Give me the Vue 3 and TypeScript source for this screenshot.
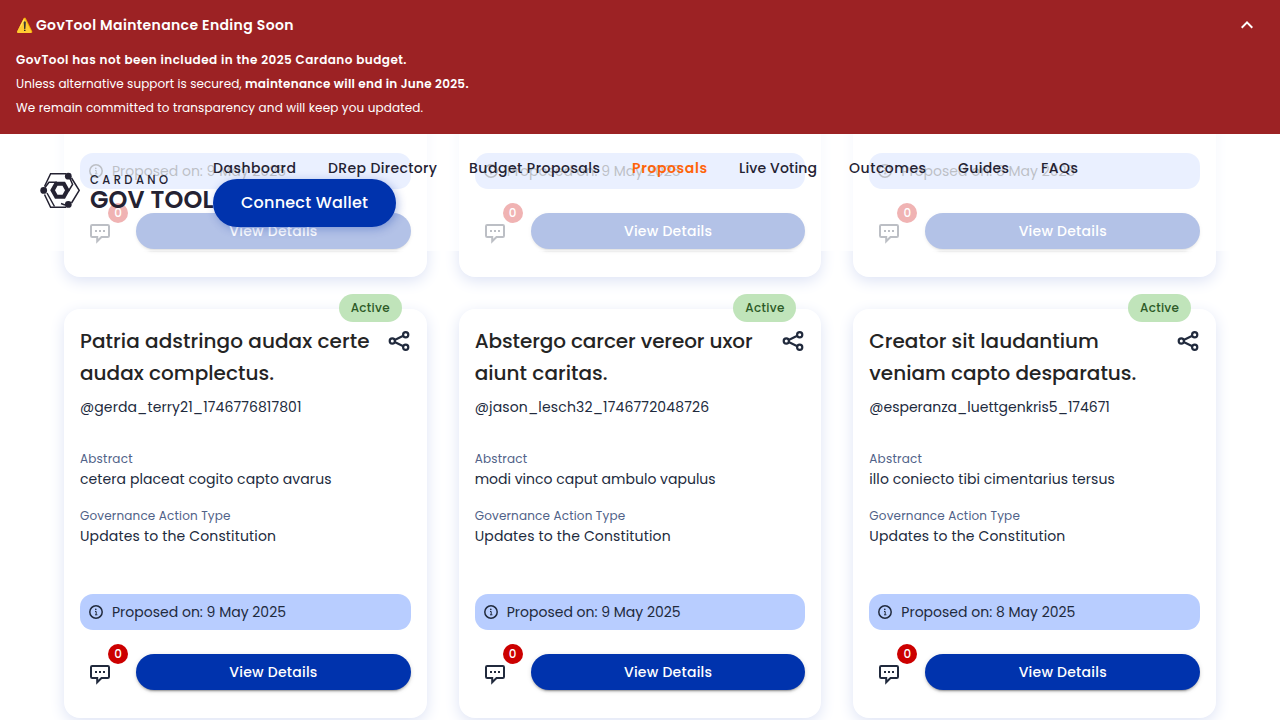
<script setup lang="ts">
interface Fitted { text: string; width: number }
interface Proposal {
  id: number
  title?: Fitted[]
  author?: Fitted
  abstract?: Fitted
  date: string
}

const nav = [
  { text: 'Dashboard', width: 83 },
  { text: 'DRep Directory', width: 109 },
  { text: 'Budget Proposals', width: 131 },
  { text: 'Proposals', width: 75, active: true },
  { text: 'Live Voting', width: 78 },
  { text: 'Outcomes', width: 77 },
  { text: 'Guides', width: 51 },
  { text: 'FAQs', width: 37 },
]

const proposals: Proposal[] = [
  { id: 1, date: '9 May 2025' },
  { id: 2, date: '9 May 2025' },
  { id: 3, date: '8 May 2025' },
  {
    id: 4,
    title: [{ text: 'Patria adstringo audax certe', width: 289.5 }, { text: 'audax complectus.', width: 194 }],
    author: { text: '@gerda_terry21_1746776817801', width: 221.5 },
    abstract: { text: 'cetera placeat cogito capto avarus', width: 251.5 },
    date: '9 May 2025',
  },
  {
    id: 5,
    title: [{ text: 'Abstergo carcer vereor uxor', width: 278 }, { text: 'aiunt caritas.', width: 133 }],
    author: { text: '@jason_lesch32_1746772048726', width: 234.5 },
    abstract: { text: 'modi vinco caput ambulo vapulus', width: 241 },
    date: '9 May 2025',
  },
  {
    id: 6,
    title: [{ text: 'Creator sit laudantium', width: 229.5 }, { text: 'veniam capto desparatus.', width: 267 }],
    author: { text: '@esperanza_luettgenkris5_174671', width: 240.5 },
    abstract: { text: 'illo coniecto tibi cimentarius tersus', width: 245.5 },
    date: '8 May 2025',
  },
]

// Spreads the letters of a label so that it takes the given width.
const vFit = {
  mounted(el: HTMLElement, binding: { value: number }) {
    const natural = el.getBoundingClientRect().width
    const gaps = (el.textContent ?? '').length - 1
    const spacing = (binding.value - natural) / gaps
    el.style.letterSpacing = `${spacing}px`
    el.style.marginRight = `${-spacing}px`
  },
}
</script>

<template>
  <div class="page">
    <div class="top">
      <section class="banner">
        <div class="banner-head">
          <span class="warn">⚠️</span>
          <span v-fit="257.5" class="fit">GovTool Maintenance Ending Soon</span>
          <svg class="chevron" viewBox="0 0 24 24" width="24" height="24">
            <path d="m12 8-6 6 1.41 1.41L12 10.83l4.59 4.58L18 14z" fill="#fff" />
          </svg>
        </div>
        <p><b v-fit="390.5" class="fit">GovTool has not been included in the 2025 Cardano budget.</b></p>
        <p><span v-fit="229" class="fit">Unless alternative support is secured, </span><b v-fit="223.5" class="fit">maintenance will end in June 2025.</b></p>
        <p><span v-fit="407" class="fit">We remain committed to transparency and will keep you updated.</span></p>
      </section>
      <header class="header">
        <div class="logo">
          <svg class="mark" viewBox="0 0 40 36" width="40" height="36">
            <g fill="none" stroke="#242232" stroke-width="1.5">
              <path d="M4.5 14.5 10.6 1.7H26M31.5 6 39.2 18.3 31.5 31M26 35.2H10.6L4.5 22.5" />
              <path d="M5 15.5 9 10.3H17M30 6.5 32.6 12.5 28.5 19M7 21 14.5 34.500M25 33 21 31.500" />
            </g>
            <g fill="#242232">
              <circle cx="3.7" cy="18.4" r="3.4" />
              <circle cx="28.3" cy="4.2" r="3.4" />
              <circle cx="28.3" cy="32.4" r="3.4" />
              <path fill-rule="evenodd" d="M10.2 18.3 15 9.8H25L29.8 18.3 25 26.8H15ZM15 18.3 17.5 22.8H22.5L25 18.3 22.5 13.8H17.5Z" />
            </g>
          </svg>
          <div class="wordmark">
            <span v-fit="78" class="fit small">CARDANO</span>
            <span v-fit="123.500" class="fit big">GOV TOOL</span>
          </div>
        </div>
        <div class="menu">
          <nav class="nav">
            <div v-for="item in nav" :key="item.text"><a v-fit="item.width" class="fit" :class="{ active: item.active }">{{ item.text }}</a></div>
          </nav>
          <button class="connect"><span v-fit="127" class="fit">Connect Wallet</span></button>
        </div>
      </header>
    </div>

    <main class="grid">
      <article v-for="p in proposals" :key="p.id" class="card">
        <template v-if="p.title && p.author && p.abstract">
          <span class="chip"><span v-fit="39" class="fit">Active</span></span>
          <div class="head">
            <h2><span v-for="line in p.title" :key="line.text" v-fit="line.width" class="fit">{{ line.text }}</span></h2>
            <svg class="share" viewBox="0 0 24 24" width="24" height="24" fill="none" stroke="#212a3d" stroke-width="2.2">
              <circle cx="5.3" cy="12" r="2.6" /><circle cx="18.7" cy="5.7" r="2.6" /><circle cx="18.7" cy="18.3" r="2.6" />
              <path d="m7.7 10.9 8.6-4.1M7.7 13.1l8.6 4.1" />
            </svg>
          </div>
          <div class="author"><span v-fit="p.author.width" class="fit">{{ p.author.text }}</span></div>
          <div class="field">
            <label><span v-fit="52.5" class="fit">Abstract</span></label>
            <div><span v-fit="p.abstract.width" class="fit">{{ p.abstract.text }}</span></div>
          </div>
          <div class="field">
            <label><span v-fit="150.5" class="fit">Governance Action Type</span></label>
            <div><span v-fit="196" class="fit">Updates to the Constitution</span></div>
          </div>
        </template>
        <div class="proposed">
          <svg viewBox="0 0 16 16" width="16" height="16">
            <circle cx="8" cy="8" r="6.2" fill="none" stroke="#212a3d" stroke-width="1.5" />
            <path d="M7 7.5h1.2v3.2M7 10.8h2.4" fill="none" stroke="#212a3d" stroke-width="1" />
            <circle cx="7.8" cy="5.4" r=".8" fill="#212a3d" />
          </svg>
          <span v-fit="174" class="fit">Proposed on: {{ p.date }}</span>
        </div>
        <div class="actions">
          <div class="comments">
            <svg viewBox="0 0 24 24" width="24" height="24">
              <path d="M4.2 5h15.6q1.2 0 1.2 1.2v9.6q0 1.2-1.2 1.2H13.5L9.2 21.3V17H4.2Q3 17 3 15.8V6.2Q3 5 4.2 5Z" fill="none" stroke="#212a3d" stroke-width="2" />
              <path d="M7 10h2v2H7zm4 0h2v2h-2zm4 0h2v2h-2z" fill="#212a3d" />
            </svg>
            <span class="badge">0</span>
          </div>
          <button class="details"><span v-fit="88" class="fit">View Details</span></button>
        </div>
      </article>
    </main>
  </div>
</template>

<style>
body { background: #fff; }
</style>

<style scoped>
.page {
  position: relative;
  height: 720px;
  overflow: hidden;
  background: #fff;
  font-family: Poppins, Inter, "Liberation Sans", sans-serif;
  font-size: 14px;
  color: #212a3d;
}
.page * { box-sizing: border-box; }
.fit { display: inline-block; white-space: pre; }
.top { position: absolute; top: 0; left: 0; right: 0; z-index: 5; }
.banner { height: 134px; padding: 13px 16px 0; background: #9c2224; color: #fff; font-size: 12px; }
.banner-head { display: flex; align-items: center; height: 24px; line-height: 24px; margin-bottom: 11px; font-size: 14px; font-weight: 600; }
.banner p { margin: 0; height: 24px; line-height: 24px; white-space: nowrap; }
.banner b { font-weight: 600; }
.warn { width: 20px; }
.chevron { margin: 0 5px 0 auto; }
.header { display: flex; height: 117px; padding-left: 40px; background: rgba(255, 255, 255, .7); }
.logo { display: flex; width: 173px; padding-top: 38px; color: #242232; }
.mark { flex: none; margin-right: 10px; }
.wordmark { display: flex; flex-direction: column; align-items: flex-start; white-space: nowrap; }
.small { font-size: 11.5px; line-height: 16px; font-weight: 500; }
.big { font-size: 24px; line-height: 23px; font-weight: 600; }
.menu { padding-top: 23px; }
.nav { display: flex; gap: 32px; height: 22px; line-height: 22px; color: #242232; font-weight: 500; white-space: nowrap; }
.active { color: #ff640a; font-weight: 600; }
button { border: 0; font: inherit; font-weight: 500; color: #fff; background: #0033ad; border-radius: 50px; padding: 0; display: flex; align-items: center; justify-content: center; }
.connect { width: 183px; height: 48px; padding-bottom: 1px; font-size: 16px; box-shadow: 2px 2px 10px rgba(0, 51, 173, .3); }
.grid { display: grid; grid-template-columns: repeat(3, 1fr); grid-auto-rows: 409px; gap: 32px; margin: -132px 64px 0; }
.card { position: relative; display: flex; flex-direction: column; padding: 16px 16px 28px; border-radius: 16px; background: #fff; box-shadow: 0 4px 15px #dde3f5; }
.chip { position: absolute; top: -15px; right: 25px; display: flex; align-items: center; justify-content: center; width: 63px; height: 28px; border-radius: 14px; background: #c0e4ba; color: #2d5a27; font-size: 12px; font-weight: 500; }
.head { display: flex; justify-content: space-between; }
h2 { display: flex; flex-direction: column; align-items: flex-start; margin: 0; font-size: 20px; line-height: 32px; font-weight: 500; color: #242424; }
.share { flex: none; margin-top: 4px; }
.author { height: 24px; margin: 6px 0 30px; line-height: 24px; }
.field { height: 57px; line-height: 20px; }
.field label { display: block; height: 19px; font-size: 12px; line-height: 19px; color: #506288; }
.field div { line-height: 22px; }
.proposed { display: flex; align-items: center; gap: 8px; height: 36px; margin-top: auto; padding-left: 8px; border-radius: 13px; background: #b8cdff; }
.actions { display: flex; align-items: center; margin-top: 24px; }
.comments { position: relative; width: 56px; padding-left: 8px; height: 24px; }
.comments svg { display: block; margin-top: 1px; }
.badge { position: absolute; top: -16px; left: 28px; width: 20px; height: 20px; border-radius: 50%; background: #cc0000; color: #fff; font-size: 12px; font-weight: 500; line-height: 20px; text-align: center; }
.details { flex: 1; height: 36px; box-shadow: 0 3px 1px -2px rgba(0, 0, 0, .2), 0 2px 2px rgba(0, 0, 0, .14), 0 1px 5px rgba(0, 0, 0, .12); }
</style>
